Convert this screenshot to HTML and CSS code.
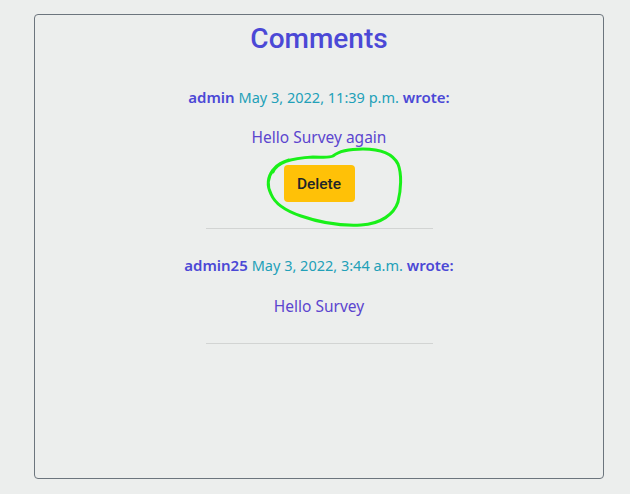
FILE: index.html
```html
<!DOCTYPE html>
<html>
<head>
<meta charset="utf-8">
<link rel="stylesheet" href="styles.css">
</head>
<body>
<div class="card">
  <h2 class="title">Comments</h2>
  <div class="comment">
    <p class="meta"><b class="user">admin</b> <span class="date">May 3, 2022, 11:39 p.m.</span> <b class="user">wrote:</b></p>
    <p class="body">Hello Survey again</p>
    <div class="actions">
      <button class="btn-delete">Delete</button>
      <svg class="scribble" width="150" height="90" viewBox="260 145 150 90">
        <path d="M272 172 C276 162 292 158 312 157 C322 157 328 158 332 156 C338 151 346 149 362 149 C380 149 392 154 397 164 C401 174 400 190 397 202 C393 214 380 224 360 225 C340 226 320 223 300 216 C285 211 274 204 270 194 C266 186 266 178 272 170 C276 164 282 162 288 160" fill="none" stroke="#19f019" stroke-width="3" stroke-linecap="round"/>
      </svg>
    </div>
    <hr class="sep">
  </div>
  <div class="comment">
    <p class="meta"><b class="user">admin25</b> <span class="date">May 3, 2022, 3:44 a.m.</span> <b class="user">wrote:</b></p>
    <p class="body">Hello Survey</p>
    <hr class="sep">
  </div>
</div>
</body>
</html>
```

FILE: styles.css
```css
html, body {
  margin: 0;
  padding: 0;
  background: #eceeed;
}
body {
  font-family: "Noto Sans", "Liberation Sans", sans-serif;
  font-size: 16px;
}
.card {
  margin: 14px 0 0 34px;
  width: 570px;
  height: 465px;
  border: 1px solid #6c757d;
  border-radius: 4px;
  padding-top: 7px;
  box-sizing: border-box;
  text-align: center;
}
.title {
  margin: 0;
  font-family: Roboto, sans-serif;
  font-weight: 500;
  font-size: 28px;
  line-height: 34px;
  color: #4b48d6;
}
.comment {
  padding-top: 29px;
}
.comment + .comment {
  padding-top: 24px;
}
.meta {
  margin: 0;
  line-height: 24px;
  font-size: 15px;
}
.user {
  color: #4b48d6;
  font-weight: 600;
}
.date {
  color: #22a0b8;
  font-size: 14.5px;
}
.body {
  margin: 16px 0 0;
  line-height: 24px;
  color: #5b45cf;
  font-size: 15.5px;
}
.comment + .comment .body {
  margin-top: 17px;
}
.actions {
  position: relative;
  margin-top: 16px;
  display: flex;
  justify-content: center;
}
.btn-delete {
  font-family: Roboto, sans-serif;
  font-size: 15.5px;
  font-weight: 500;
  color: #212529;
  background: #ffc107;
  border: none;
  border-radius: 4px;
  width: 71px;
  height: 37px;
  padding: 0;
}
.scribble {
  position: absolute;
  left: 50%;
  top: -20px;
  margin-left: -58px;
}
.sep {
  width: 227px;
  margin: 26px auto 0;
  border: 0;
  border-top: 1px solid #d2d4d3;
}
.comment + .comment .sep {
  margin-top: 25px;
}
```
